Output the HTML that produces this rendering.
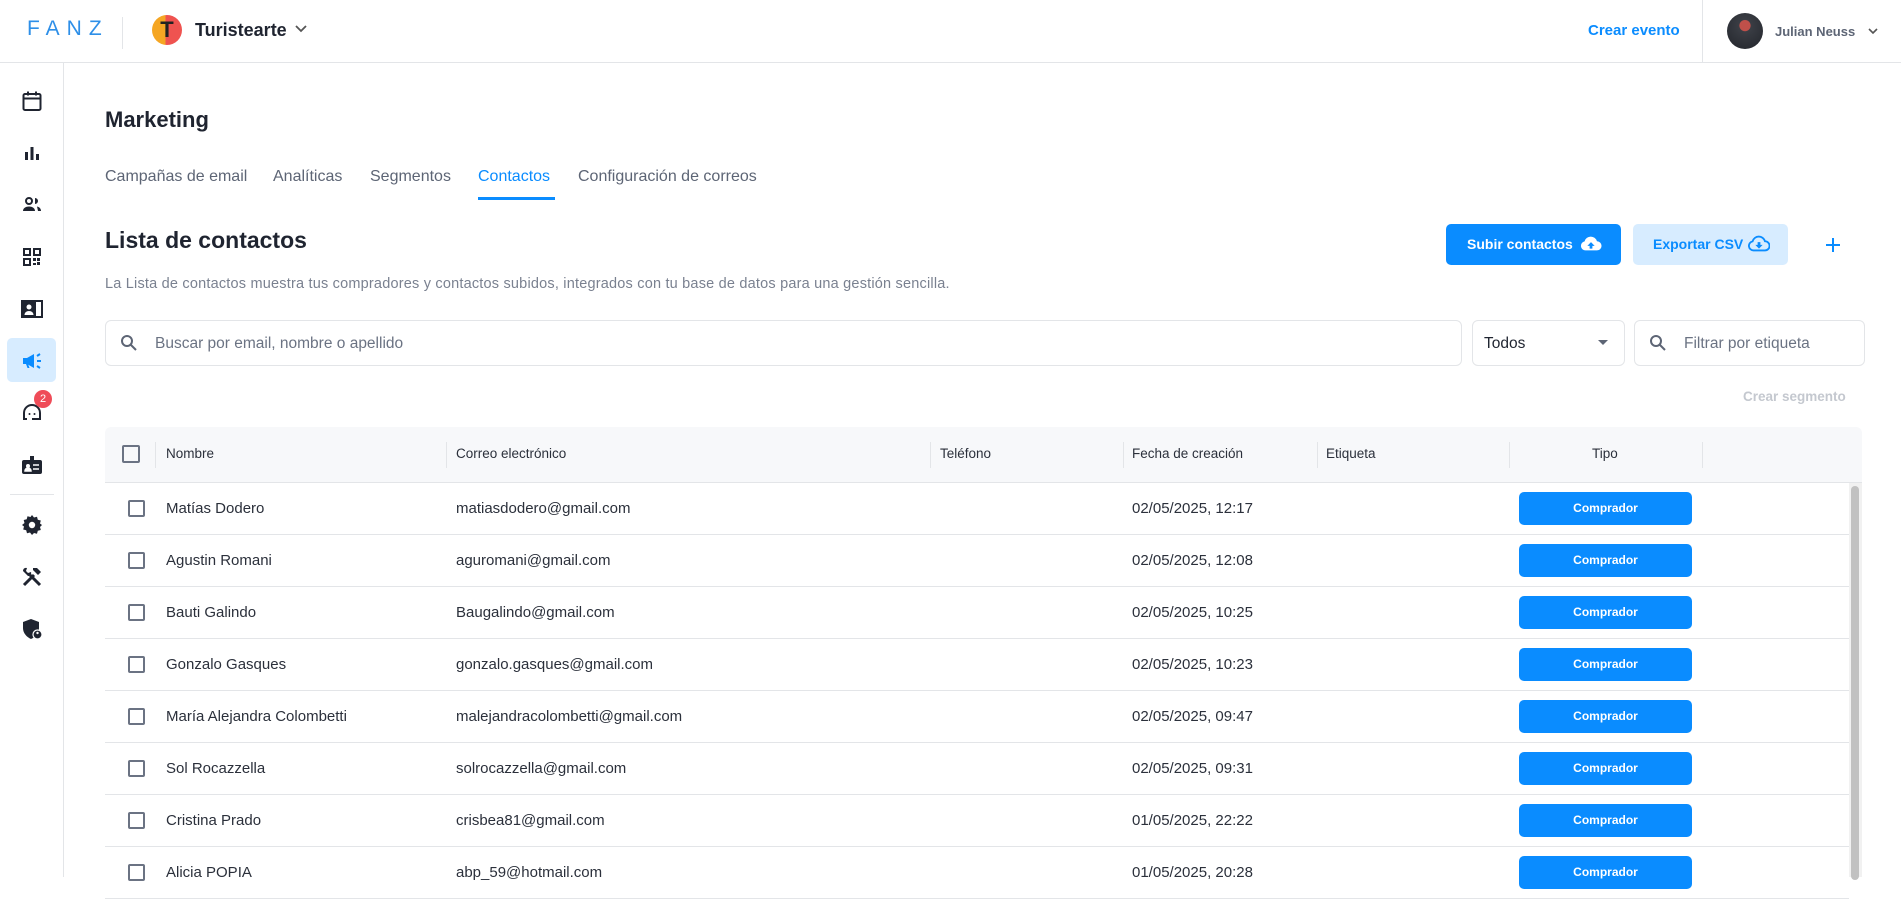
<!DOCTYPE html>
<html><head><meta charset="utf-8"><style>
*{box-sizing:border-box;margin:0;padding:0}
body{width:1901px;height:877px;overflow:hidden;background:#fff;font-family:"Liberation Sans",sans-serif;color:#1f2430;position:relative}
.a{position:absolute}
.hdr{left:0;top:0;width:1901px;height:63px;border-bottom:1px solid #e3e5e8}
.side{left:0;top:63px;width:64px;height:814px;border-right:1px solid #e3e5e8}
.ic{position:absolute;left:20px;width:24px;height:24px}
.tab{position:absolute;top:168px;font-size:16px;color:#5d6575}
.row{position:absolute;left:105px;width:1744px;height:52px;border-bottom:1px solid #e3e5e8;font-size:15px;color:#2b303b}
.row span{position:absolute;top:17px}
.cb{position:absolute;width:17px;height:17px;border:2px solid #6b7383;border-radius:2px}
.btn{position:absolute;left:1414px;top:9px;width:173px;height:33px;background:#0a8cff;border-radius:5px;color:#fff;font-size:12px;font-weight:bold;text-align:center;line-height:33px}
.th{position:absolute;top:19px;font-size:13.5px;color:#2b303b}
.sep{position:absolute;top:15px;width:1px;height:26px;background:#e3e5e8}
</style></head><body>
<div class="a hdr">
 <div class="a" style="left:27px;top:17px;font-size:21px;letter-spacing:7px;color:#2e8fe8;font-weight:300">FANZ</div>
 <div class="a" style="left:122px;top:17px;width:1px;height:32px;background:#e3e5e8"></div>
 <div class="a" style="left:152px;top:15px;width:30px;height:30px;border-radius:50%;background:linear-gradient(90deg,#f5a623 45%,#ef5350 45%);color:#222;font-weight:bold;font-size:22px;text-align:center;line-height:30px">T</div>
 <div class="a" style="left:195px;top:20px;font-size:18px;font-weight:bold;color:#1f2430">Turistearte</div>
 <svg class="a" style="left:294px;top:24px" width="14" height="10"><path d="M2 2l5 5 5-5" stroke="#555" stroke-width="1.8" fill="none"/></svg>
 <div class="a" style="left:1588px;top:22px;font-size:15px;font-weight:bold;color:#0a8cff">Crear evento</div>
 <div class="a" style="left:1702px;top:0;width:1px;height:63px;background:#e3e5e8"></div>
 <div class="a" style="left:1727px;top:13px;width:36px;height:36px;border-radius:50%;background:radial-gradient(circle at 50% 35%,#c0504a 0 18%,#3a3d44 20%,#22252b)"></div>
 <div class="a" style="left:1775px;top:24px;font-size:13px;font-weight:bold;color:#5d6575">Julian Neuss</div>
 <svg class="a" style="left:1867px;top:27px" width="12" height="8"><path d="M2 2l4 4 4-4" stroke="#555" stroke-width="1.6" fill="none"/></svg>
</div>
<div class="a side">
 <svg class="ic" style="top:26px" viewBox="0 0 24 24"><rect x="3.5" y="5" width="17" height="16" rx="1.5" fill="none" stroke="#1f2430" stroke-width="2"/><path d="M3.5 9.5h17M8 2.5v4M16 2.5v4" stroke="#1f2430" stroke-width="2"/></svg>
 <svg class="ic" style="top:78px" viewBox="0 0 24 24"><path d="M5 11h3v8H5zM10.5 6h3v13h-3zM16 13h3v6h-3z" fill="#1f2430"/></svg>
 <svg class="ic" style="top:130px" viewBox="0 0 24 24"><circle cx="9" cy="8" r="3" fill="none" stroke="#1f2430" stroke-width="2"/><path d="M3 18c0-3 3-4.5 6-4.5s6 1.5 6 4.5z" fill="#1f2430"/><path d="M15 5a3 3 0 010 6M17 13.5c2 .5 4 1.8 4 4.5h-3" fill="#1f2430"/></svg>
 <svg class="ic" style="top:182px" viewBox="0 0 24 24"><path d="M4 4h6v6H4zM14 4h6v6h-6zM4 14h6v6H4z" fill="none" stroke="#1f2430" stroke-width="2"/><path d="M13 13h3v3h-3zM17 17h3v3h-3zM13 18h3v2h-3zM17 13h3v3h-3z" fill="#1f2430"/></svg>
 <svg class="ic" style="top:234px" viewBox="0 0 24 24"><path d="M2 4h20v16H2z" fill="none" stroke="#1f2430" stroke-width="2"/><rect x="2" y="4" width="14" height="16" fill="#1f2430"/><circle cx="9" cy="10" r="2.5" fill="#fff"/><path d="M4.5 18c0-2.5 2-4 4.5-4s4.5 1.5 4.5 4z" fill="#fff"/></svg>
 <div class="a" style="left:7px;top:275px;width:49px;height:44px;background:#d7ecff;border-radius:5px"></div>
 <svg class="ic" style="top:286px" viewBox="0 0 24 24"><path d="M3 9h4l7-4v14l-7-4H3z" fill="#0a8cff"/><path d="M6 15l1.5 4h2L8 15" fill="#0a8cff"/><path d="M17 12h4M17 7l3-2M17 17l3 2" stroke="#0a8cff" stroke-width="2"/></svg>
 <svg class="ic" style="top:338px" viewBox="0 0 24 24"><path d="M4 16v-4a8 8 0 0116 0v4" fill="none" stroke="#1f2430" stroke-width="2"/><circle cx="9.5" cy="13" r="1" fill="#1f2430"/><circle cx="14.5" cy="13" r="1" fill="#1f2430"/><path d="M4 13v5h3M20 13v5h-8" stroke="#1f2430" stroke-width="2" fill="none"/></svg>
 <div class="a" style="left:34px;top:327px;width:18px;height:18px;border-radius:50%;background:#ef4c58;color:#fff;font-size:11px;text-align:center;line-height:18px">2</div>
 <svg class="ic" style="top:390px" viewBox="0 0 24 24"><rect x="2" y="7" width="20" height="14" rx="2" fill="#1f2430"/><rect x="10" y="3" width="4" height="6" fill="#1f2430"/><circle cx="8" cy="13" r="2" fill="#fff"/><path d="M5 18c0-2 1.5-3 3-3s3 1 3 3zM13 12h6M13 16h6" fill="#fff" stroke="#fff" stroke-width="1.5"/></svg>
 <div class="a" style="left:10px;top:431px;width:44px;height:1px;background:#e3e5e8"></div>
 <svg class="ic" style="top:450px" viewBox="0 0 24 24"><path d="M12 2l2 2.5 3-.8.8 3 3 .8-.8 3L22 12l-2 2 .8 3-3 .8-.8 3-3-.8L12 22l-2-2.5-3 .8-.8-3-3-.8.8-3L2 12l2.5-2-.8-3 3-.8.8-3 3 .8z" fill="#1f2430"/><circle cx="12" cy="12" r="3.2" fill="#fff"/></svg>
 <svg class="ic" style="top:502px" viewBox="0 0 24 24"><path d="M4 20L14 10M10 10l10 10" stroke="#1f2430" stroke-width="3"/><path d="M13 3l4 0 4 4-3 3-5-5z" fill="#1f2430"/><path d="M3 6a3 3 0 014-3l-1 3 2 2 3-1a3 3 0 01-3 4z" fill="#1f2430"/></svg>
 <svg class="ic" style="top:554px" viewBox="0 0 24 24"><path d="M11 2l8 3v6c0 5-3.5 9-8 11-4.5-2-8-6-8-11V5z" fill="#1f2430"/><circle cx="17.5" cy="17.5" r="4.5" fill="#1f2430" stroke="#fff" stroke-width="1.2"/><circle cx="17.5" cy="16" r="1.2" fill="#fff"/></svg>
</div>

<div class="a" style="left:105px;top:107px;font-size:22px;font-weight:bold;color:#1f2430">Marketing</div>
<div class="tab" style="left:105px">Campañas de email</div>
<div class="tab" style="left:273px">Analíticas</div>
<div class="tab" style="left:370px">Segmentos</div>
<div class="tab" style="left:478px;color:#0a8cff">Contactos</div>
<div class="a" style="left:478px;top:197px;width:77px;height:3px;background:#0a8cff"></div>
<div class="tab" style="left:578px">Configuración de correos</div>

<div class="a" style="left:105px;top:227px;font-size:23px;font-weight:bold;color:#1f2430">Lista de contactos</div>
<div class="a" style="left:105px;top:276px;font-size:14.5px;color:#7a8190;letter-spacing:.2px">La Lista de contactos muestra tus compradores y contactos subidos, integrados con tu base de datos para una gestión sencilla.</div>
<div class="a" style="left:1446px;top:224px;width:175px;height:41px;background:#0a8cff;border-radius:5px;color:#fff;font-size:14px;font-weight:bold;line-height:41px;padding-left:21px">Subir contactos<svg style="position:absolute;left:134px;top:11px" width="22" height="18" viewBox="0 0 24 18"><path d="M6 16a5 5 0 01-1-9.9A7 7 0 0118.5 6 4.5 4.5 0 0118.5 16z" fill="#fff"/><path d="M12 7l-4 4h2.5v3h3v-3H16z" fill="#0a8cff"/></svg></div>
<div class="a" style="left:1633px;top:224px;width:155px;height:41px;background:#d7ecff;border-radius:5px;color:#0a8cff;font-size:14px;font-weight:bold;line-height:41px;padding-left:20px">Exportar CSV<svg style="position:absolute;left:115px;top:11px" width="22" height="18" viewBox="0 0 24 18"><path d="M6 16a5 5 0 01-1-9.9A7 7 0 0118.5 6 4.5 4.5 0 0118.5 16z" fill="none" stroke="#0a8cff" stroke-width="2"/><path d="M12 14l-4-4h2.5V7h3v3H16z" fill="#0a8cff"/></svg></div>
<svg class="a" style="left:1825px;top:237px" width="16" height="16"><path d="M8 1v14M1 8h14" stroke="#0a8cff" stroke-width="2"/></svg>

<div class="a" style="left:105px;top:320px;width:1357px;height:46px;border:1px solid #e3e5e8;border-radius:6px"></div>
<svg class="a" style="left:120px;top:334px" width="18" height="18" viewBox="0 0 18 18"><circle cx="7" cy="7" r="5" fill="none" stroke="#5d6575" stroke-width="2"/><path d="M11 11l5 5" stroke="#5d6575" stroke-width="2"/></svg>
<div class="a" style="left:155px;top:335px;font-size:15.5px;color:#6b7383">Buscar por email, nombre o apellido</div>
<div class="a" style="left:1472px;top:320px;width:153px;height:46px;border:1px solid #e3e5e8;border-radius:6px"></div>
<div class="a" style="left:1484px;top:335px;font-size:15.5px;color:#1f2430">Todos</div>
<svg class="a" style="left:1598px;top:340px" width="10" height="6"><path d="M0 0h10L5 5z" fill="#5d6575"/></svg>
<div class="a" style="left:1634px;top:320px;width:231px;height:46px;border:1px solid #e3e5e8;border-radius:6px"></div>
<svg class="a" style="left:1649px;top:334px" width="18" height="18" viewBox="0 0 18 18"><circle cx="7" cy="7" r="5" fill="none" stroke="#5d6575" stroke-width="2"/><path d="M11 11l5 5" stroke="#5d6575" stroke-width="2"/></svg>
<div class="a" style="left:1684px;top:335px;font-size:15.5px;color:#6b7383">Filtrar por etiqueta</div>
<div class="a" style="left:1743px;top:389px;font-size:13.5px;color:#c4c8cf;font-weight:bold">Crear segmento</div>

<div class="a" style="left:105px;top:427px;width:1757px;height:56px;background:#f7f8fa;border-radius:6px 6px 0 0;border-bottom:1px solid #e3e5e8">
 <div class="cb" style="left:17px;top:18px;width:18px;height:18px"></div>
 <div class="sep" style="left:50px"></div><div class="th" style="left:61px">Nombre</div>
 <div class="sep" style="left:341px"></div><div class="th" style="left:351px">Correo electrónico</div>
 <div class="sep" style="left:825px"></div><div class="th" style="left:835px">Teléfono</div>
 <div class="sep" style="left:1018px"></div><div class="th" style="left:1027px">Fecha de creación</div>
 <div class="sep" style="left:1212px"></div><div class="th" style="left:1221px">Etiqueta</div>
 <div class="sep" style="left:1404px"></div><div class="th" style="left:1487px">Tipo</div>
 <div class="sep" style="left:1597px"></div>
</div>
<div class="a" style="left:1849px;top:483px;width:13px;height:394px;background:#f1f1f1"></div>
<div class="a" style="left:1851px;top:486px;width:8px;height:394px;background:#c1c1c1;border-radius:4px"></div>

<div class="row" style="top:483px"><div class="cb" style="left:23px;top:17px"></div><span style="left:61px">Matías Dodero</span><span style="left:351px">matiasdodero@gmail.com</span><span style="left:1027px">02/05/2025, 12:17</span><div class="btn">Comprador</div></div>
<div class="row" style="top:535px"><div class="cb" style="left:23px;top:17px"></div><span style="left:61px">Agustin Romani</span><span style="left:351px">aguromani@gmail.com</span><span style="left:1027px">02/05/2025, 12:08</span><div class="btn">Comprador</div></div>
<div class="row" style="top:587px"><div class="cb" style="left:23px;top:17px"></div><span style="left:61px">Bauti Galindo</span><span style="left:351px">Baugalindo@gmail.com</span><span style="left:1027px">02/05/2025, 10:25</span><div class="btn">Comprador</div></div>
<div class="row" style="top:639px"><div class="cb" style="left:23px;top:17px"></div><span style="left:61px">Gonzalo Gasques</span><span style="left:351px">gonzalo.gasques@gmail.com</span><span style="left:1027px">02/05/2025, 10:23</span><div class="btn">Comprador</div></div>
<div class="row" style="top:691px"><div class="cb" style="left:23px;top:17px"></div><span style="left:61px">María Alejandra Colombetti</span><span style="left:351px">malejandracolombetti@gmail.com</span><span style="left:1027px">02/05/2025, 09:47</span><div class="btn">Comprador</div></div>
<div class="row" style="top:743px"><div class="cb" style="left:23px;top:17px"></div><span style="left:61px">Sol Rocazzella</span><span style="left:351px">solrocazzella@gmail.com</span><span style="left:1027px">02/05/2025, 09:31</span><div class="btn">Comprador</div></div>
<div class="row" style="top:795px"><div class="cb" style="left:23px;top:17px"></div><span style="left:61px">Cristina Prado</span><span style="left:351px">crisbea81@gmail.com</span><span style="left:1027px">01/05/2025, 22:22</span><div class="btn">Comprador</div></div>
<div class="row" style="top:847px"><div class="cb" style="left:23px;top:17px"></div><span style="left:61px">Alicia POPIA</span><span style="left:351px">abp_59@hotmail.com</span><span style="left:1027px">01/05/2025, 20:28</span><div class="btn">Comprador</div></div>
</body></html>
